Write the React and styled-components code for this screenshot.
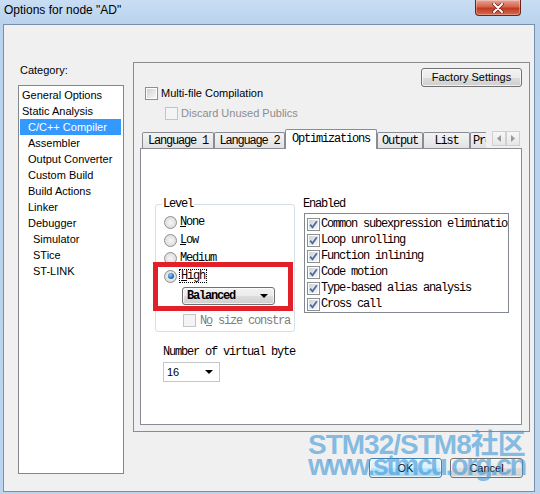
import React from "react";
import styled, { createGlobalStyle, css } from "styled-components";

const UI = `"Liberation Sans", Arial, sans-serif`;
const MONO = `"Liberation Mono", "Courier New", monospace`;

const Global = createGlobalStyle`
  html, body { margin: 0; padding: 0; background: #bcd4ee; }
  body { font-family: ${UI}; }
  * { box-sizing: border-box; }
`;

const Window = styled.div`
  position: relative;
  width: 540px;
  height: 494px;
  display: flex;
  flex-direction: column;
  background: linear-gradient(180deg, #c9ddf3 0px, #b9d2ed 24px, #bcd4ee 100%);
  overflow: hidden;
`;

const TitleBar = styled.div`
  height: 24px;
  flex: none;
  display: flex;
  justify-content: space-between;
  align-items: flex-start;
  padding-left: 4px;
`;

const Title = styled.div`
  font: 12px/20px ${UI};
  color: #000;
`;

const CloseButton = styled.div`
  width: 46px;
  height: 16px;
  margin-right: 19px;
  border: 1px solid #6a2418;
  border-top: none;
  border-radius: 0 0 4px 4px;
  background: linear-gradient(#e9a596, #d5644d 45%, #c23a20 55%, #d56a4f);
  box-shadow: inset 0 0 0 1px rgba(255, 255, 255, 0.3);
  display: flex;
  align-items: center;
  justify-content: center;
`;

const Client = styled.div`
  flex: 1;
  margin: 0 5px 2px 3px;
  border: 1px solid #7890ab;
  background: #f0f0f0;
  display: grid;
  grid-template-columns: 106px 397px;
  grid-template-rows: 370px auto;
  column-gap: 9px;
  padding: 37px 0 0 14px;
`;

const LeftColumn = styled.div`
  grid-row: 1 / span 2;
  display: flex;
  flex-direction: column;
`;

const CategoryLabel = styled.div`
  font: 11px/16px ${UI};
  padding-left: 2px;
  color: #000;
`;

const CategoryList = styled.div`
  margin-top: 7px;
  height: 389px;
  border: 1px solid #828790;
  background: #fff;
  padding-top: 1px;
`;

const CategoryItem = styled.div`
  height: 16px;
  line-height: 16px;
  font-size: 11px;
  font-family: ${UI};
  white-space: nowrap;
  margin: 0 2px 0 1px;
  padding-left: ${(p) => p.$indent}px;
  color: #000;
  ${(p) =>
    p.$selected &&
    css`
      background: #3399ff;
      color: #fff;
    `}
`;

const Panel = styled.div`
  border: 1px solid #8c8c8c;
  display: flex;
  flex-direction: column;
`;

const FactoryRow = styled.div`
  display: flex;
  justify-content: flex-end;
  padding: 5px 7px 0 0;
`;

const WinButton = styled.div`
  width: ${(p) => p.$w}px;
  height: ${(p) => p.$h}px;
  border: 1px solid ${(p) => (p.$default ? "#3c7fb1" : "#707070")};
  border-radius: 3px;
  background: ${(p) =>
    p.$default
      ? "linear-gradient(#eaf6fd 0%, #d9f0fc 50%, #bee6fd 50%, #a7d9f5 100%)"
      : "linear-gradient(#f2f2f2 0%, #ebebeb 50%, #dddddd 50%, #cfcfcf 100%)"};
  box-shadow: inset 0 0 0 1px rgba(255, 255, 255, 0.7);
  display: flex;
  align-items: center;
  justify-content: center;
  font: 11px/1 ${UI};
  color: #000;
`;

const CheckRow = styled.div`
  display: flex;
  align-items: center;
  height: 13px;
  gap: 3px;
  margin: ${(p) => p.$mt}px 0 0 ${(p) => p.$ml}px;
  font: 11px/13px ${UI};
  color: ${(p) => (p.$disabled ? "#8d8d8d" : "#000")};
  white-space: nowrap;
`;

const Check = styled.span`
  width: 13px;
  height: 13px;
  flex: none;
  padding: 1px;
  border: 1px solid ${(p) => (p.$disabled ? "#c4c4c4" : "#8e8f8f")};
  background: ${(p) =>
    p.$disabled
      ? "#f4f4f4"
      : "linear-gradient(135deg, #cfd2d7, #f6f7f8) content-box, #fff"};
  display: flex;
  align-items: center;
  justify-content: center;
`;

const TabStrip = styled.div`
  position: relative;
  z-index: 1;
  display: flex;
  align-items: flex-end;
  height: 20px;
  margin: 9px 9px -1px 8px;
`;

const TabViewport = styled.div`
  flex: 1;
  height: 20px;
  display: flex;
  align-items: flex-end;
  overflow: hidden;
`;

const Tab = styled.div`
  flex: none;
  width: ${(p) => p.$w}px;
  height: ${(p) => (p.$active ? 20 : 16)}px;
  margin-bottom: ${(p) => (p.$active ? 0 : 1)}px;
  padding: ${(p) => (p.$active ? 2 : 1)}px 0 0 ${(p) => (p.$clipped ? 2 : 0)}px;
  border: 1px solid #898c95;
  border-bottom: none;
  border-radius: 2px 2px 0 0;
  background: ${(p) => (p.$active ? "#fff" : "linear-gradient(#f3f3f3, #e2e2e2)")};
  display: flex;
  justify-content: ${(p) => (p.$clipped ? "flex-start" : "center")};
  overflow: hidden;
  white-space: nowrap;
  font: 12px/14px ${MONO};
  letter-spacing: -1.2px;
  color: #000;
`;

const ScrollArrows = styled.div`
  display: flex;
  margin: 0 0 3px 6px;
`;

const ScrollArrow = styled.div`
  width: 14px;
  height: 15px;
  border: 1px solid #d0d0d0;
  background: linear-gradient(#f7f7f7, #e6e6e6);
  display: flex;
  align-items: center;
  justify-content: center;
`;

const TabPage = styled.div`
  margin: 0 7px 0 6px;
  height: 277px;
  border: 1px solid #898c95;
  background: #fff;
  display: grid;
  grid-template-columns: 140px 207px;
  column-gap: 8px;
  align-content: start;
  align-items: start;
  padding: 49px 0 0 14px;
  font: 12px/12px ${MONO};
  letter-spacing: -1.2px;
  color: #000;
`;

const Column = styled.div`
  display: flex;
  flex-direction: column;
`;

const Group = styled.fieldset`
  margin: 0;
  padding: 0;
  min-width: 0;
  border: 1px solid #d5dfe5;
  border-radius: 3px;
`;

const Legend = styled.legend`
  padding: 0 1px;
  margin-left: 6px;
  font: 12px/12px ${MONO};
  letter-spacing: -1.2px;
`;

const GroupBody = styled.div`
  position: relative;
  padding: 3px 0 4px 8px;
`;

const RadioRow = styled.div`
  display: flex;
  align-items: center;
  height: 18px;
  gap: 3px;
  white-space: nowrap;
`;

const Radio = styled.span`
  width: 13px;
  height: 13px;
  flex: none;
  border-radius: 50%;
  border: 1px solid #8e8f8f;
  background: radial-gradient(circle at 50% 50%, #f6f6f6 0%, #e2e2e2 60%, #d2d2d2 100%);
  display: flex;
  align-items: center;
  justify-content: center;
  ${(p) =>
    p.$checked &&
    css`
      &::after {
        content: "";
        width: 6px;
        height: 6px;
        border-radius: 50%;
        background: radial-gradient(circle at 40% 35%, #8fd0fa 0%, #2a74c4 55%, #0f3f7d 100%);
      }
    `}
`;

const FocusText = styled.span`
  outline: 1px dotted #000;
  outline-offset: 0px;
  padding: 0 1px;
`;

const Combo = styled.div`
  width: ${(p) => p.$w}px;
  height: ${(p) => p.$h}px;
  margin: ${(p) => p.$mt}px 0 0 ${(p) => p.$ml}px;
  display: flex;
  align-items: center;
  justify-content: space-between;
  padding: 0 6px 0 ${(p) => p.$pl}px;
  ${(p) =>
    p.$flat
      ? css`
          border: 1px solid #c5c7cc;
          background: #fff;
          font: 11px/1 ${UI};
          letter-spacing: 0;
        `
      : css`
          border: 1px solid #707070;
          border-radius: 3px;
          background: linear-gradient(#f2f2f2 0%, #ebebeb 50%, #dddddd 50%, #cfcfcf 100%);
          box-shadow: inset 0 0 0 1px rgba(255, 255, 255, 0.7);
          font-weight: 700;
        `}
`;

const DropArrow = styled.span`
  width: 0;
  height: 0;
  border-left: 4px solid transparent;
  border-right: 4px solid transparent;
  border-top: 4px solid #000;
`;

const RedFrame = styled.div`
  position: absolute;
  left: -3px;
  top: 52px;
  width: 140px;
  height: 49px;
  border: 5px solid #e2202a;
  pointer-events: none;
`;

const DisabledRow = styled.div`
  display: flex;
  align-items: center;
  height: 13px;
  gap: 4px;
  margin: 9px 0 0 19px;
  color: #7d7d7d;
  white-space: nowrap;
  overflow: hidden;
`;

const FieldLabel = styled.div`
  margin: ${(p) => p.$mt}px 0 0 ${(p) => p.$ml}px;
  white-space: nowrap;
  height: 12px;
`;

const EnabledList = styled.div`
  margin: 3px 0 0 1px;
  width: 205px;
  height: 100px;
  border: 1px solid #828790;
  padding: 2px 0 0 2px;
  overflow: hidden;
`;

const EnabledItem = styled.div`
  display: flex;
  align-items: center;
  height: 16px;
  gap: 1px;
  white-space: nowrap;
`;

const ButtonRow = styled.div`
  grid-column: 2;
  display: flex;
  justify-content: flex-end;
  gap: 8px;
  padding: 26px 7px 0 0;
`;

const Watermark = styled.div`
  position: absolute;
  left: 308px;
  top: 431px;
  pointer-events: none;
  color: rgba(60, 150, 215, 0.62);
  font-family: "Liberation Sans", "Noto Sans CJK SC", sans-serif;
  font-weight: 700;
  line-height: 1;
`;

const WatermarkLine = styled.div`
  font-size: ${(p) => p.$size}px;
  letter-spacing: ${(p) => p.$ls}px;
  margin-top: ${(p) => p.$mt}px;
  white-space: nowrap;
`;

const CheckMark = () => (
  <svg width="9" height="9" viewBox="0 0 9 9">
    <path d="M1.2 4.6 L3.5 7.3 L7.9 1.3" fill="none" stroke="#4a67a0" strokeWidth="1.7" />
  </svg>
);

const categories = [
  { label: "General Options", indent: 2 },
  { label: "Static Analysis", indent: 2 },
  { label: "C/C++ Compiler", indent: 8, selected: true },
  { label: "Assembler", indent: 8 },
  { label: "Output Converter", indent: 8 },
  { label: "Custom Build", indent: 8 },
  { label: "Build Actions", indent: 8 },
  { label: "Linker", indent: 8 },
  { label: "Debugger", indent: 8 },
  { label: "Simulator", indent: 13 },
  { label: "STice", indent: 13 },
  { label: "ST-LINK", indent: 13 },
];

const tabs = [
  { label: "Language 1", w: 72 },
  { label: "Language 2", w: 71 },
  { label: "Optimizations", w: 92, active: true },
  { label: "Output", w: 46 },
  { label: "List", w: 47 },
  { label: "Preprocessor", w: 90, clipped: true },
];

const enabled = [
  "Common subexpression elimination",
  "Loop unrolling",
  "Function inlining",
  "Code motion",
  "Type-based alias analysis",
  "Cross call",
];

export default function App() {
  return (
    <>
      <Global />
      <Window>
        <TitleBar>
          <Title>Options for node "AD"</Title>
          <CloseButton>
            <svg width="12" height="10" viewBox="0 0 12 10">
              <path d="M2 1 L10 9 M10 1 L2 9" stroke="#6b2015" strokeWidth="3.4" strokeLinecap="round" />
              <path d="M2 1 L10 9 M10 1 L2 9" stroke="#ffffff" strokeWidth="2" strokeLinecap="round" />
            </svg>
          </CloseButton>
        </TitleBar>
        <Client>
          <LeftColumn>
            <CategoryLabel>Category:</CategoryLabel>
            <CategoryList>
              {categories.map((c) => (
                <CategoryItem key={c.label} $indent={c.indent} $selected={c.selected}>
                  {c.label}
                </CategoryItem>
              ))}
            </CategoryList>
          </LeftColumn>
          <Panel>
            <FactoryRow>
              <WinButton $w={101} $h={19}>Factory Settings</WinButton>
            </FactoryRow>
            <CheckRow $mt={0} $ml={11}>
              <Check />
              Multi-file Compilation
            </CheckRow>
            <CheckRow $mt={7} $ml={31} $disabled>
              <Check $disabled />
              Discard Unused Publics
            </CheckRow>
            <TabStrip>
              <TabViewport>
                {tabs.map((t) => (
                  <Tab key={t.label} $w={t.w} $active={t.active} $clipped={t.clipped}>
                    {t.label}
                  </Tab>
                ))}
              </TabViewport>
              <ScrollArrows>
                <ScrollArrow>
                  <svg width="4" height="7" viewBox="0 0 4 7">
                    <path d="M4 0 L0 3.5 L4 7 Z" fill="#9a9a9a" />
                  </svg>
                </ScrollArrow>
                <ScrollArrow>
                  <svg width="4" height="7" viewBox="0 0 4 7">
                    <path d="M0 0 L4 3.5 L0 7 Z" fill="#9a9a9a" />
                  </svg>
                </ScrollArrow>
              </ScrollArrows>
            </TabStrip>
            <TabPage>
              <Column>
                <Group>
                  <Legend>Level</Legend>
                  <GroupBody>
                    <RadioRow>
                      <Radio />
                      <span>
                        <u>N</u>one
                      </span>
                    </RadioRow>
                    <RadioRow>
                      <Radio />
                      <span>
                        <u>L</u>ow
                      </span>
                    </RadioRow>
                    <RadioRow>
                      <Radio />
                      <span>
                        <u>M</u>edium
                      </span>
                    </RadioRow>
                    <RadioRow>
                      <Radio $checked />
                      <FocusText>
                        <u>H</u>igh
                      </FocusText>
                    </RadioRow>
                    <Combo $w={93} $h={18} $mt={2} $ml={18} $pl={4}>
                      <span>Balanced</span>
                      <DropArrow />
                    </Combo>
                    <DisabledRow>
                      <Check $disabled />
                      <span>
                        N<u>o</u> size constra
                      </span>
                    </DisabledRow>
                    <RedFrame />
                  </GroupBody>
                </Group>
                <FieldLabel $mt={14} $ml={8}>Number of virtual byte</FieldLabel>
                <Combo $flat $w={57} $h={20} $mt={4} $ml={8} $pl={3}>
                  <span>16</span>
                  <DropArrow />
                </Combo>
              </Column>
              <Column>
                <FieldLabel $mt={0} $ml={0}>Enabled</FieldLabel>
                <EnabledList>
                  {enabled.map((e) => (
                    <EnabledItem key={e}>
                      <Check>
                        <CheckMark />
                      </Check>
                      {e}
                    </EnabledItem>
                  ))}
                </EnabledList>
              </Column>
            </TabPage>
          </Panel>
          <ButtonRow>
            <WinButton $w={73} $h={20} $default>
              OK
            </WinButton>
            <WinButton $w={73} $h={20}>
              Cancel
            </WinButton>
          </ButtonRow>
        </Client>
        <Watermark>
          <WatermarkLine $size={28} $ls={-1} $mt={0}>
            STM32/STM8社区
          </WatermarkLine>
          <WatermarkLine $size={29} $ls={-2.5} $mt={-8}>
            www.stmcu.org.cn
          </WatermarkLine>
        </Watermark>
      </Window>
    </>
  );
}
